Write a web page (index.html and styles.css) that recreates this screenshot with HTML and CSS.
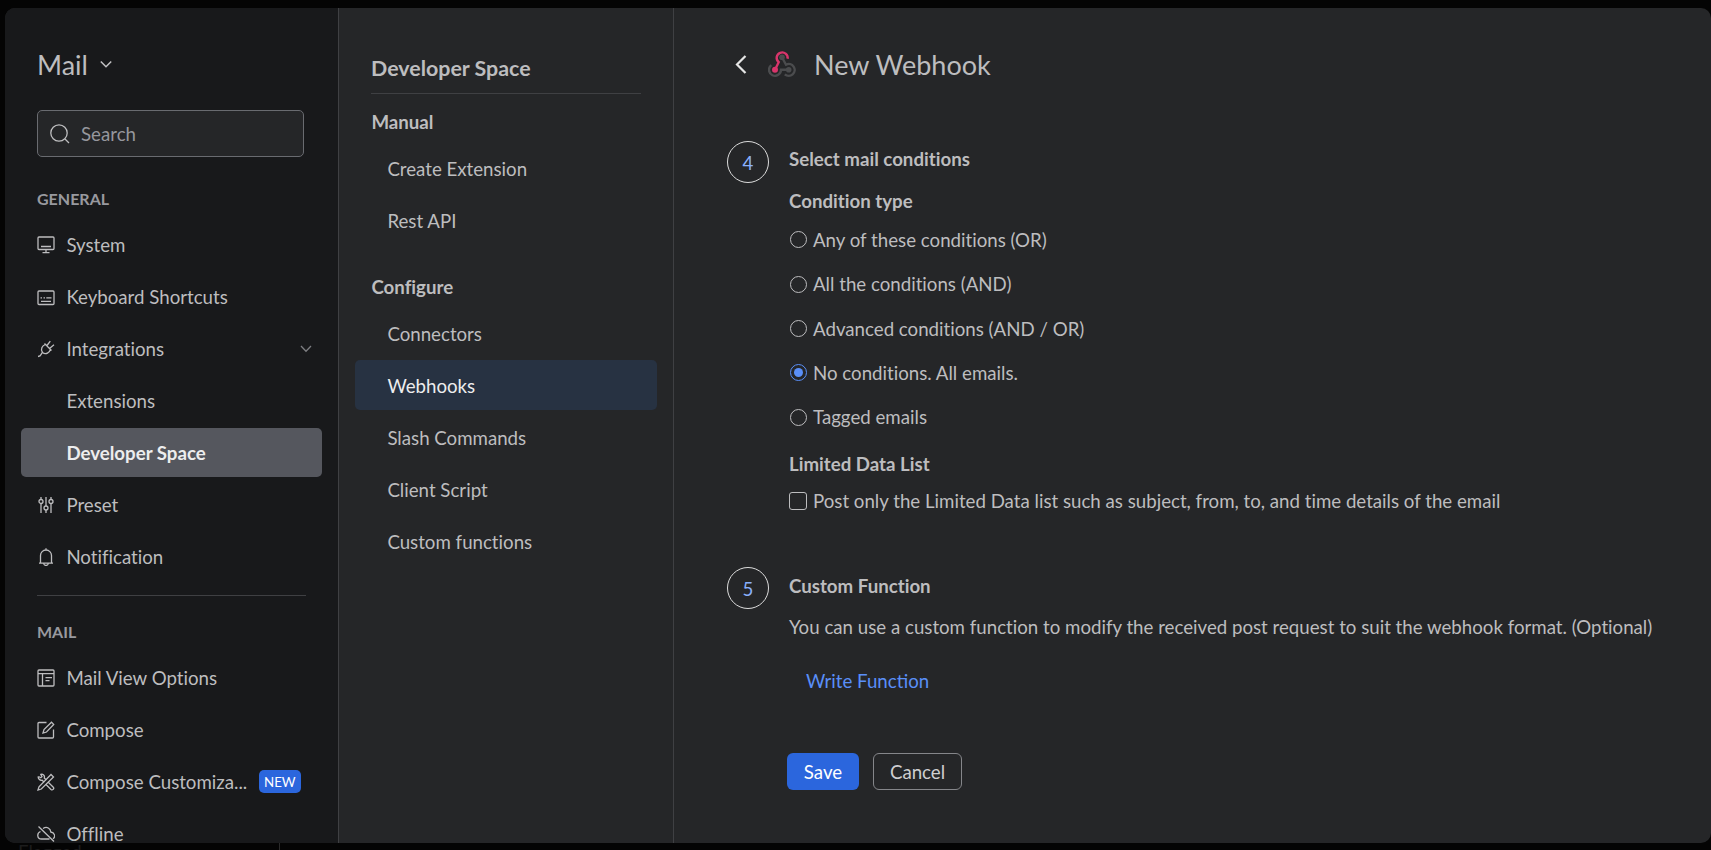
FILE: index.html
```
<!DOCTYPE html>
<html lang="en">
<head>
    <meta charset="UTF-8">
    <meta name="viewport" content="width=device-width, initial-scale=1.0">
    <title>Settings</title>
    <link rel="stylesheet" href="styles.css">
</head>
<body>
    <div class="behind"><span class="behind-text">Flagged</span></div>

    <div class="settings">
        <aside class="sidebar">
            <div class="app-title">
                <span>Mail</span>
                <svg width="12" height="8" viewBox="0 0 12 8"><path d="M.8 1.500l5.200 5.200L11.200 1.500"/></svg>
            </div>

            <div class="search">
                <svg width="20" height="20" viewBox="0 0 20 20"><circle cx="9" cy="9" r="8.2"/><path d="M15 15l4 4"/></svg>
                <span>Search</span>
            </div>

            <div class="group-title">GENERAL</div>
            <div class="item">
                <svg class="icon" viewBox="0 0 18 18"><rect x="1" y="1" width="16" height="12.5" rx="1"/><path d="M4 10.5h10M9 13.5v3M5.500 16.700h7"/></svg>
                <span>System</span>
            </div>
            <div class="item">
                <svg class="icon" viewBox="0 0 18 18"><rect x="1" y="3" width="16" height="13.500" rx="1"/><path d="M3.500 9.800H5M6.500 9.800H8M9.300 9.800h5.200M4 13.300h10"/></svg>
                <span>Keyboard Shortcuts</span>
            </div>
            <div class="item">
                <svg class="icon" viewBox="0 0 18 18"><path d="M7.500 3.500l7 7M8.500 4.500C5.500 5.500 3 9 5.500 12.500C9 15 12.500 12.500 13.500 9.500M10 5.500l3.300-4.300M12.800 8.200l4.200-3.400M5.500 12.500c-2 1-.5 4-4.500 4"/></svg>
                <span>Integrations</span>
                <svg class="arrow" width="12" height="8" viewBox="0 0 12 8"><path d="M1 1l5 5.200L11 1"/></svg>
            </div>
            <div class="item sub">Extensions</div>
            <div class="item sub active">Developer Space</div>
            <div class="item">
                <svg class="icon" viewBox="0 0 18 18"><path d="M4 1v2.500M4 7.500V17M9 1v9M9 14v3M14 1v2.500M14 7.500V17"/><circle cx="4" cy="5.500" r="2"/><circle cx="9" cy="12" r="2"/><circle cx="14" cy="5.500" r="2"/></svg>
                <span>Preset</span>
            </div>
            <div class="item">
                <svg class="icon" viewBox="0 0 18 18"><path d="M2 15.200h14M3.500 15V7.500a5.500 5.500 0 0 1 11 0V15M9 2V.2M6.700 15.500c.3 2.600 4.300 2.600 4.600 0"/></svg>
                <span>Notification</span>
            </div>

            <div class="divider"></div>

            <div class="group-title mail-title">MAIL</div>
            <div class="item">
                <svg class="icon" viewBox="0 0 18 18"><rect x="1" y="1" width="16" height="16" rx="1"/><path d="M1 4.700h16M5.500 4.700V17M8.500 8.700H15M8.500 11.700h4"/></svg>
                <span>Mail View Options</span>
            </div>
            <div class="item">
                <svg class="icon" viewBox="0 0 18 18"><path d="M9.500 1.500H2a1 1 0 0 0-1 1V16a1 1 0 0 0 1 1h13.500a1 1 0 0 0 1-1V8.500M6 12l1-3.500 7.500-7.300 2.200 2.200L9.500 11z"/></svg>
                <span>Compose</span>
            </div>
            <div class="item">
                <svg class="icon" viewBox="0 0 18 18"><path d="M1 17l1-3.200L14 1.500l2.500 2.500L4.300 16z"/><path d="M1.500 3.500l2.300 1.300 1.200-1.200L3.800 1.300c2-.6 4.300 1 3.500 3.700l2 2M1.300 3.500C.8 5.500 2.800 7.800 5.200 7.200l2 2M11 9l5.300 5.200c1.300 1.500-.8 3.500-2.300 2.300L9 11.500"/></svg>
                <span>Compose Customiza...</span>
                <span class="badge">NEW</span>
            </div>
            <div class="item">
                <svg class="icon" viewBox="0 0 18 18"><path d="M1.500 1.500l15.500 15M6 3.500c4-2.500 7.500 0 7.800 3.500 4 .3 5 5 2.200 6.800M3.500 6.500c-4 1.500-3.500 7.500 1 7.500h8"/></svg>
                <span>Offline</span>
            </div>
        </aside>

        <nav class="subnav">
            <h2>Developer Space</h2>
            <h3>Manual</h3>
            <a class="link">Create Extension</a>
            <a class="link">Rest API</a>
            <h3 class="configure">Configure</h3>
            <a class="link">Connectors</a>
            <a class="link selected">Webhooks</a>
            <a class="link">Slash Commands</a>
            <a class="link">Client Script</a>
            <a class="link">Custom functions</a>
        </nav>

        <main class="content">
            <div class="header">
                <svg class="back" width="12" height="19" viewBox="0 0 12 19"><path d="M10.500 1L2 9.500l8.500 8.500"/></svg>
                <svg class="hook" width="28" height="28" viewBox="0 0 28 28">
                    <path class="grey" d="M14 7.300l4 7.400a5.900 5.900 0 1 1-1.200 9.600M20.700 19.700H13a6 6 0 1 1-9.700-4.600"/>
                    <path class="pink" d="M7 19.700l3.700-7.500a5.500 5.500 0 1 1 8.900-3.400"/>
                    <circle class="grey-dot" cx="14" cy="7.300" r="2.800"/>
                    <circle class="pink-dot" cx="7" cy="19.700" r="3"/>
                    <circle class="grey-dot" cx="20.700" cy="19.700" r="2.800"/>
                </svg>
                <h1>New Webhook</h1>
            </div>

            <section class="step">
                <div class="number">4</div>
                <div class="step-body">
                    <h4>Select mail conditions</h4>
                    <h4 class="type-title">Condition type</h4>
                    <label class="option"><i class="radio"></i>Any of these conditions (OR)</label>
                    <label class="option"><i class="radio"></i>All the conditions (AND)</label>
                    <label class="option"><i class="radio"></i>Advanced conditions (AND / OR)</label>
                    <label class="option"><i class="radio checked"></i>No conditions. All emails.</label>
                    <label class="option"><i class="radio"></i>Tagged emails</label>
                    <h4 class="limited-title">Limited Data List</h4>
                    <label class="option limited"><i class="checkbox"></i>Post only the Limited Data list such as subject, from, to, and time details of the email</label>
                </div>
            </section>

            <section class="step custom">
                <div class="number">5</div>
                <div class="step-body">
                    <h4>Custom Function</h4>
                    <p>You can use a custom function to modify the received post request to suit the webhook format. (Optional)</p>
                    <a class="write">Write Function</a>
                </div>
            </section>

            <div class="buttons">
                <button class="save">Save</button>
                <button class="cancel">Cancel</button>
            </div>
        </main>
    </div>
</body>
</html>
```
FILE: styles.css
```
* {
    box-sizing: border-box;
}

body {
    margin: 0;
    height: 850px;
    padding: 8px 0 7px 5px;
    overflow: hidden;
    position: relative;
    background-color: #040404;
    color: #bdbdbf;
    font-family: Lato, "Liberation Sans", sans-serif;
    font-size: 18.68px;
    font-variant-ligatures: none;
}

h1, h2, h3, h4, p {
    margin: 0;
}

svg {
    fill: none;
    stroke: #bdbdbf;
    stroke-width: 1.3;
    flex-shrink: 0;
}

/* dimmed mail list under the dialog */
.behind {
    position: absolute;
    left: 0;
    bottom: 0;
    width: 280px;
    height: 7px;
    overflow: hidden;
    border-right: 1px solid #2a2a2a;
}

.behind-text {
    display: block;
    margin: -1px 0 0 18px;
    line-height: 20px;
    color: #1c1c1c;
}

.settings {
    display: flex;
    position: relative;
    width: 1706px;
    height: 835px;
    border-radius: 10px;
    overflow: hidden;
    background-color: #252628;
}

/* left sidebar */
.sidebar {
    width: 334px;
    flex-shrink: 0;
    padding: 35px 16px 0;
    overflow: hidden;
    background-color: #18191b;
    border-right: 1px solid #3f4043;
}

.app-title {
    display: flex;
    align-items: center;
    gap: 12px;
    height: 42px;
    margin-left: 16px;
    font-size: 27px;
}

.app-title svg {
    stroke-width: 1.6;
}

.search {
    display: flex;
    align-items: center;
    gap: 11px;
    width: 267px;
    height: 47px;
    margin: 25px 0 0 16px;
    padding-left: 12px;
    border: 1px solid #696b70;
    border-radius: 5px;
    background-color: #252628;
    color: #96979d;
}

.group-title {
    height: 20px;
    margin: 32px 0 11px 16px;
    line-height: 20px;
    font-size: 16px;
    font-weight: bold;
    color: #98999f;
}

.item {
    display: flex;
    align-items: center;
    height: 49px;
    margin-bottom: 3px;
    padding-left: 16px;
    border-radius: 5px;
    white-space: nowrap;
}

.icon {
    width: 18px;
    height: 18px;
    margin-right: 11.4px;
}

.arrow {
    margin: 0 10px 0 auto;
    stroke: #7d7e82;
}

.sub {
    padding-left: 45.4px;
}

.active {
    background-color: #55575e;
    color: #ededee;
    font-weight: bold;
}

.badge {
    width: 42px;
    height: 23px;
    margin-left: 11.6px;
    border-radius: 5px;
    background-color: #2b66dd;
    color: #fff;
    font-size: 13.3px;
    line-height: 24px;
    text-align: center;
}

.divider {
    width: 269px;
    height: 1px;
    margin: 14px 0 0 16px;
    background-color: #3f4043;
}

.mail-title {
    margin: 26px 0 11px 16px;
}

/* second column */
.subnav {
    width: 335px;
    flex-shrink: 0;
    padding: 45px 16px 0;
    border-right: 1px solid #3f4043;
}

.subnav h2 {
    width: 270px;
    height: 41px;
    margin-left: 16px;
    line-height: 30px;
    font-size: 21.4px;
    border-bottom: 1px solid #3f4043;
}

.subnav h3 {
    height: 30px;
    margin: 13px 0 6px 16.4px;
    line-height: 30px;
    font-size: 18.68px;
}

.subnav .configure {
    margin: 27px 0 6px 16.4px;
}

.link {
    display: flex;
    align-items: center;
    height: 50px;
    margin-bottom: 2px;
    padding: 2px 0 0 32.4px;
    border-radius: 5px;
}

.selected {
    background-color: #273242;
    color: #ededee;
}

/* webhook form */
.content {
    flex: 1;
    padding: 36px 0 0 53px;
}

.header {
    display: flex;
    align-items: center;
    height: 40px;
    padding-left: 8px;
}

.header h1 {
    font-size: 27px;
    font-weight: normal;
}

.back {
    stroke: #e6e6e6;
    stroke-width: 2.2;
}

.hook {
    margin: 0 18px 0 21px;
    stroke-width: 2.4;
}

.grey {
    stroke: #4b4c4e;
}

.pink {
    stroke: #d8356b;
}

.grey-dot {
    fill: #4b4c4e;
    stroke: none;
}

.pink-dot {
    fill: #d8356b;
    stroke: none;
}

.step {
    display: flex;
    gap: 20px;
    margin-top: 57px;
}

.number {
    width: 42px;
    height: 42px;
    flex-shrink: 0;
    border: 1px solid #dcdcdc;
    border-radius: 50%;
    color: #8ab0fb;
    line-height: 42px;
    text-align: center;
}

.step h4 {
    height: 30px;
    margin-top: 3px;
    line-height: 30px;
    font-size: 18.68px;
}

.step .type-title {
    margin: 12px 0 8.75px;
}

.option {
    display: flex;
    align-items: center;
    height: 30px;
    margin-bottom: 14.4px;
    white-space: nowrap;
}

.radio {
    width: 17px;
    height: 17px;
    margin: 0 6px 0 1px;
    border: 1px solid #bdbdbf;
    border-radius: 50%;
}

.checked {
    padding: 3px;
    border-color: #5a8ff8;
    background-color: #5a8ff8;
    background-clip: content-box;
}

.checkbox {
    width: 18px;
    height: 18px;
    margin-right: 6px;
    border: 1px solid #bdbdbf;
    border-radius: 3px;
}

.step .limited-title {
    margin: 16.25px 0 7px;
}

.limited {
    margin-bottom: 0;
}

.custom {
    margin-top: 51px;
}

.custom h4 {
    margin-top: 4px;
}

.custom p {
    margin-top: 11px;
    line-height: 30px;
    white-space: nowrap;
}

.write {
    display: block;
    margin: 24px 0 0 17px;
    line-height: 30px;
    font-variant-ligatures: normal;
    color: #5a8ff8;
}

.buttons {
    display: flex;
    gap: 14px;
    margin: 57px 0 0 60px;
}

.buttons button {
    height: 37px;
    padding: 2px 0 0;
    border: none;
    border-radius: 6px;
    font: inherit;
}

.buttons .save {
    width: 72px;
    background-color: #2b66dd;
    color: #fff;
}

.buttons .cancel {
    width: 89px;
    border: 1px solid #85868a;
    background: none;
    color: #cfcfd0;
}
```
